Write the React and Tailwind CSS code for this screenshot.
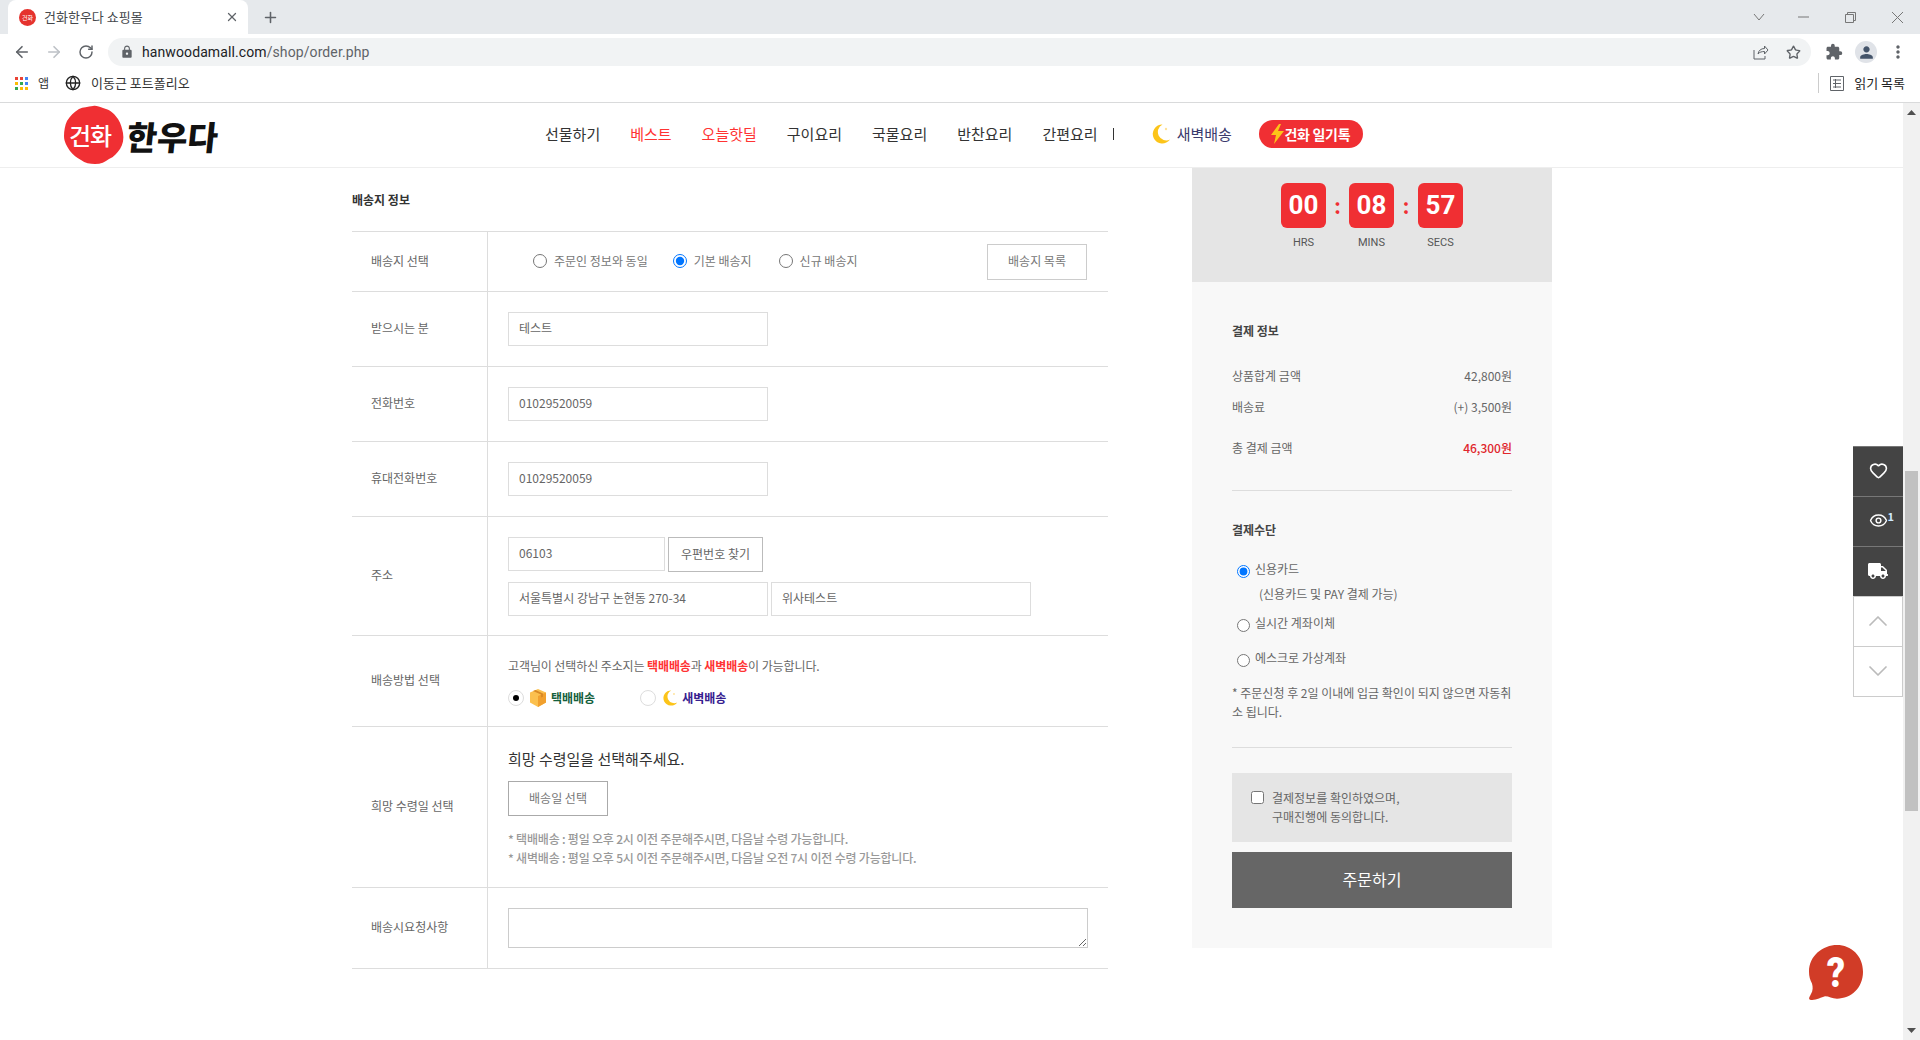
import React from 'react';
import { ArrowLeft, ArrowRight, RotateCw, Star, Globe, Heart, Eye, ChevronUp, ChevronDown, X, Plus } from 'lucide-react';
import { FaTruck } from 'react-icons/fa';
import { MdExtension, MdPerson, MdLock, MdMoreVert } from 'react-icons/md';

const KR = 'font-["Noto_Sans_CJK_KR","Noto_Sans",sans-serif]';

function Moon({ size = 20 }) {
  return (
    <svg width={size} height={size} viewBox="0 0 20 20">
      <path d="M11.500 .5A9.500 9.500 0 1 0 19 15.500 8 8 0 0 1 11.500 .5z" fill="#fcc419" />
      <circle cx="15" cy="5" r="1.200" fill="#ffe39a" />
    </svg>
  );
}

function Box() {
  return (
    <svg width="16" height="18" viewBox="0 0 16 18">
      <path d="M8 0l8 3.500v10L8 18l-8-4.500v-10z" fill="#fbc04e" />
      <path d="M8 7l8-3.500v10L8 18z" fill="#f1a02e" />
      <path d="M3 2l8 3.500v3l2-.8V4.500L5.500 1z" fill="#d98a26" />
    </svg>
  );
}

function Logo() {
  return (
    <div className="relative w-[170px] h-[60px] ml-[63px] shrink-0">
      <svg width="62" height="60" viewBox="0 0 62 60" className="absolute left-0 top-0">
        <path d="M30 1c5-1 8 2 13 3 6 2 9 6 12 10 3 5 4 9 5 14 1 6 0 11-3 16-3 4-6 8-11 10-4 3-8 5-14 5-5 0-10-1-14-4-4-2-8-5-11-9-3-5-6-9-6-15 0-5 1-11 3-15C7 11 11 7 16 4c4-2 9-2 14-3z" fill="#f02f33" />
      </svg>
      <span className={`absolute left-[6px] top-[12px] text-[24px] leading-[36px] font-medium tracking-[-1px] text-white ${KR}`}>건화</span>
      <span className={`absolute left-[64px] top-[9px] text-[33px] leading-[44px] font-black tracking-[0px] text-[#111] -skew-x-6 ${KR}`}>한우다</span>
    </div>
  );
}

function ChromeBar() {
  return (
    <div className="shrink-0 text-[#5f6368]">
      <div className="h-[34px] bg-[#e6e9ec] flex items-end pl-2">
        <div className="w-[240px] h-[34px] bg-white rounded-t-lg flex items-center pl-[11px] pr-[9px]">
          <span className={`size-[17px] rounded-full bg-[#e5332e] text-white text-[6px] flex items-center justify-center ${KR}`}>건화</span>
          <span className={`ml-2 flex-1 text-[13px] text-[#45494d] ${KR}`}>건화한우다 쇼핑몰</span>
          <X size={14} strokeWidth={2.200} />
        </div>
        <div className="ml-[14px] h-[34px] flex items-center"><Plus size={17} strokeWidth={2.200} /></div>
        <div className="flex-1" />
        <div className="h-[34px] flex items-center text-[#777]">
          <svg width="12" height="8" viewBox="0 0 12 8" className="mr-[33px]"><path d="M1 1l5 6 5-6" fill="none" stroke="currentColor" /></svg>
          <svg width="11" height="2" viewBox="0 0 11 2" className="mr-[36px]"><path d="M0 1h11" stroke="currentColor" /></svg>
          <svg width="11" height="11" viewBox="0 0 11 11" className="mr-[36px]"><path d="M.5 2.500h8v8h-8zM2.500 2.500v-2h8v8h-2" fill="none" stroke="currentColor" /></svg>
          <svg width="11" height="11" viewBox="0 0 11 11" className="mr-[17px]"><path d="M0 0l11 11M11 0L0 11" stroke="currentColor" /></svg>
        </div>
      </div>
      <div className="h-[36px] bg-white flex items-center pl-[13px]">
        <ArrowLeft size={18} strokeWidth={2.200} />
        <ArrowRight size={18} strokeWidth={2.200} className="ml-[14px] text-[#bdc1c6]" />
        <RotateCw size={16} strokeWidth={2.200} className="ml-[15px]" />
        <div className="ml-[14px] w-[1703px] h-[28px] bg-[#f1f3f4] rounded-full flex items-center pl-[12px] pr-[10px]">
          <MdLock size={14} />
          <span className="ml-[8px] flex-1 text-[14px] tracking-[.1px] font-['Roboto',sans-serif] text-[#202124]">
            hanwoodamall.com<span className="text-[#5f6368]">/shop/order.php</span>
          </span>
          <svg width="16" height="16" viewBox="0 0 16 16" className="mr-[17px]">
            <path d="M1 6v9h11v-3M5 10c.5-3.500 3-5.500 6.500-5.500V2L15 6l-3.500 4V7.500C9 7.500 6.500 8 5 10z" fill="none" stroke="currentColor" />
          </svg>
          <Star size={15} strokeWidth={2.200} />
        </div>
        <MdExtension size={18} className="ml-[14px]" />
        <span className="ml-[12px] size-[22px] rounded-full bg-[#e0e3e8] flex items-center justify-center text-[#44546a]"><MdPerson size={19} /></span>
        <MdMoreVert size={20} className="ml-[11px]" />
      </div>
      <div className="h-[33px] bg-white border-b border-[#d9dadb] flex items-center pl-[15px] pr-[15px] pb-[6px]">
        <div className="grid grid-cols-3 gap-[2px]">
          <i className="size-[3px] bg-[#ea4335]" /><i className="size-[3px] bg-[#ea4335]" /><i className="size-[3px] bg-[#4285f4]" />
          <i className="size-[3px] bg-[#fbbc04]" /><i className="size-[3px] bg-[#34a853]" /><i className="size-[3px] bg-[#4285f4]" />
          <i className="size-[3px] bg-[#34a853]" /><i className="size-[3px] bg-[#fbbc04]" /><i className="size-[3px] bg-[#fbbc04]" />
        </div>
        <span className={`ml-[10px] text-[12px] text-[#333] ${KR}`}>앱</span>
        <Globe size={16} className="ml-[16px] text-[#222]" />
        <span className={`ml-[10px] text-[13px] text-[#333] ${KR}`}>이동근 포트폴리오</span>
        <div className="flex-1" />
        <i className="w-px h-[20px] bg-[#ccc] mr-[11px]" />
        <svg width="14" height="15" viewBox="0 0 14 15" className="mr-[10px]">
          <path d="M.5.500h13v14H.500zM3 4h8M3 7.500h8M3 11h8M5.500 3v9" fill="none" stroke="#5f6368" />
        </svg>
        <span className={`text-[13px] text-[#222] ${KR}`}>읽기 목록</span>
      </div>
    </div>
  );
}

function Header() {
  const items = [
    ['선물하기', 'text-[#333]'], ['베스트', 'text-[#f33]'], ['오늘핫딜', 'text-[#f33]'], ['구이요리', 'text-[#333]'],
    ['국물요리', 'text-[#333]'], ['반찬요리', 'text-[#333]'], ['간편요리', 'text-[#333]'],
  ];
  return (
    <div className="h-[65px] border-b border-[#eee] flex items-center shrink-0">
      <Logo />
      <nav className={`ml-[312px] pb-[2px] flex items-center text-[15px] ${KR}`}>
        <div className="flex items-center gap-[30px]">
          {items.map(([t, c]) => <a key={t} className={c}>{t}</a>)}
        </div>
        <i className="ml-[15px] w-px h-[12px] bg-[#333]" />
        <span className="ml-[37px] flex items-center"><Moon /></span>
        <a className="ml-[6px] text-[#3b3b6d]">새벽배송</a>
        <a className="ml-[27px] w-[104px] h-[28px] rounded-full bg-[#f02f33] text-white font-bold text-[14px] flex items-center justify-center tracking-[-.3px]">
          <svg width="13" height="20" viewBox="0 0 13 20" className="shrink-0"><path d="M8 0 0 11h5l-2 9 10-13H7l3-7z" fill="#fcc419" /></svg>
          건화 일기톡
        </a>
      </nav>
    </div>
  );
}

function Row({ label, className = '', children }) {
  return (
    <div className="grid grid-cols-[136px_1fr] border-b border-[#ddd]">
      <div className="border-r border-[#ddd] pl-[19px] pb-[2px] flex items-center text-[12px] text-[#666]">{label}</div>
      <div className={`pl-5 ${className}`}>{children}</div>
    </div>
  );
}

function Field({ value, className = 'w-[260px]' }) {
  return (
    <input
      readOnly
      value={value}
      className={`${className} h-[34px] border border-[#ddd] px-[10px] pb-[3px] text-[12px] text-[#666] outline-none ${KR}`}
    />
  );
}

function Radio({ label, checked }) {
  return (
    <label className="flex items-center gap-[7px] text-[12px] text-[#777]">
      <input type="radio" name="addr" defaultChecked={checked} className="size-[14px]" />
      <span className="pb-px">{label}</span>
    </label>
  );
}

function ShippingForm() {
  return (
    <div className="w-[756px] shrink-0">
      <h3 className="pt-6 pb-[23px] text-[12px] leading-4 font-bold text-[#333]">배송지 정보</h3>
      <div className="border-t border-[#ddd]">
        <Row label="배송지 선택" className="h-[59px] flex items-center">
          <div className="ml-[25px] pb-px flex items-center">
            <Radio label="주문인 정보와 동일" />
            <div className="ml-[25px]"><Radio label="기본 배송지" checked /></div>
            <div className="ml-[27px]"><Radio label="신규 배송지" /></div>
          </div>
          <button className="ml-auto mr-[21px] w-[100px] h-[36px] border border-[#ccc] pb-[2px] text-[12px] text-[#777]">배송지 목록</button>
        </Row>
        <Row label="받으시는 분" className="py-5"><Field value="테스트" /></Row>
        <Row label="전화번호" className="py-5"><Field value="01029520059" /></Row>
        <Row label="휴대전화번호" className="py-5"><Field value="01029520059" /></Row>
        <Row label="주소" className="pt-5 pb-[19px]">
          <div className="flex gap-[3px]">
            <Field value="06103" className="w-[157px]" />
            <button className="w-[95px] h-[35px] border border-[#bbb] pb-[2px] text-[12px] text-[#666]">우편번호 찾기</button>
          </div>
          <div className="flex gap-[3px] mt-[10px]">
            <Field value="서울특별시 강남구 논현동 270-34" />
            <Field value="위사테스트" className="w-[260px]" />
          </div>
        </Row>
        <Row label="배송방법 선택" className="h-[90px] pt-[22px]">
          <p className="text-[12px] leading-4 tracking-[-.1px] text-[#666]">
            고객님이 선택하신 주소지는 <b className="text-[#f33]">택배배송</b>과 <b className="text-[#f33]">새벽배송</b>이 가능합니다.
          </p>
          <div className="mt-4 flex items-center h-4 text-[12px] font-bold">
            <span className="size-4 rounded-full border border-[#ddd] flex items-center justify-center"><i className="size-[6px] rounded-full bg-black" /></span>
            <span className="ml-[6px]"><Box /></span>
            <span className="ml-[5px] text-[#14603c]">택배배송</span>
            <span className="ml-[45px] size-4 rounded-full border border-[#ddd]" />
            <span className="ml-[6px] flex"><Moon size={16} /></span>
            <span className="ml-[4px] text-[#37208f]">새벽배송</span>
          </div>
        </Row>
        <Row label="희망 수령일 선택" className="h-[160px] pt-[20px]">
          <p className="text-[15px] leading-6 text-[#333]">희망 수령일을 선택해주세요.</p>
          <button className="mt-[10px] block w-[100px] h-[35px] border border-[#aaa] pb-[2px] text-[12px] text-[#777]">배송일 선택</button>
          <p className="mt-[13px] text-[12px] leading-[19px] tracking-[-.2px] font-medium text-[#999]">* 택배배송 : 평일 오후 2시 이전 주문해주시면, 다음날 수령 가능합니다.</p>
          <p className="text-[12px] leading-[19px] tracking-[-.2px] font-medium text-[#999]">* 새벽배송 : 평일 오후 5시 이전 주문해주시면, 다음날 오전 7시 이전 수령 가능합니다.</p>
        </Row>
        <Row label="배송시요청사항" className="py-5">
          <textarea readOnly className="block w-[580px] h-10 border border-[#ccc] outline-none" />
        </Row>
      </div>
    </div>
  );
}

function TimeBox({ value, label }) {
  return (
    <div className="w-[45px] flex flex-col items-center">
      <div className="size-[45px] rounded-[6px] bg-[#f02f33] text-white text-[26px] font-bold flex items-center justify-center font-['Roboto',sans-serif]">{value}</div>
      <span className="mt-[7px] text-[11px] leading-4 text-[#555] font-['Roboto',sans-serif]">{label}</span>
    </div>
  );
}

function PayRadio({ label, checked, className = '' }) {
  return (
    <label className={`flex items-start h-[18px] pl-[5px] text-[12px] leading-[18px] text-[#666] ${className}`}>
      <input type="radio" name="pay" defaultChecked={checked} className="mt-[5px] size-[13px]" />
      <span className="ml-[5px]">{label}</span>
    </label>
  );
}

function Sidebar() {
  return (
    <div className="w-[360px] ml-[84px] shrink-0 self-start">
      <div className="h-[114px] bg-[#e5e5e5] pt-[15px] flex justify-center">
        <TimeBox value="00" label="HRS" />
        <span className="w-[23px] h-[45px] flex items-center justify-center text-[#f02f33] text-[20px] font-bold">:</span>
        <TimeBox value="08" label="MINS" />
        <span className="w-[24px] h-[45px] flex items-center justify-center text-[#f02f33] text-[20px] font-bold">:</span>
        <TimeBox value="57" label="SECS" />
      </div>
      <div className="bg-[#f8f8f8] px-10 pt-10 pb-10 text-[12px] leading-[18px] text-[#666]">
        <h4 className="font-bold text-[#444]">결제 정보</h4>
        <div className="mt-[27px] flex justify-between"><span>상품합계 금액</span><span>42,800원</span></div>
        <div className="mt-[13px] flex justify-between"><span>배송료</span><span>(+) 3,500원</span></div>
        <div className="mt-[23px] flex justify-between"><span>총 결제 금액</span><span className="text-[#e0262c] font-medium">46,300원</span></div>
        <hr className="mt-[33px] border-[#ddd]" />
        <h4 className="mt-[30px] font-bold text-[#444]">결제수단</h4>
        <PayRadio label="신용카드" checked className="mt-[21px]" />
        <p className="mt-[7px] ml-[27px]">(신용카드 및 PAY 결제 가능)</p>
        <PayRadio label="실시간 계좌이체" className="mt-[11px]" />
        <PayRadio label="에스크로 가상계좌" className="mt-[17px]" />
        <p className="mt-[16px] leading-[19px] break-all">* 주문신청 후 2일 이내에 입금 확인이 되지 않으면 자동취소 됩니다.</p>
        <hr className="mt-[26px] border-[#ddd]" />
        <div className="mt-[25px] h-[69px] bg-[#e5e5e5] pt-[15px] pl-[19px] flex items-start">
          <input type="checkbox" className="mt-[3px] size-[13px]" />
          <p className="ml-2 leading-[19px]">결제정보를 확인하였으며,<br />구매진행에 동의합니다.</p>
        </div>
        <button className="mt-[10px] block w-full h-[56px] bg-[#666] pb-[2px] text-white text-[16px]">주문하기</button>
      </div>
    </div>
  );
}

function Floating() {
  return (
    <>
      <div className="absolute right-0 top-[343px] w-[50px] text-white">
        <div className="h-[50px] bg-[#444] border-t border-[#777] pb-[2px] flex items-center justify-center"><Heart size={19} strokeWidth={2} /></div>
        <div className="relative h-[50px] bg-[#444] border-t border-[#777] pb-[2px] flex items-center justify-center">
          <Eye size={19} strokeWidth={1.800} />
          <span className="absolute right-[9px] top-[13px] text-[11px] leading-3 font-bold text-[#cfeaff]">1</span>
        </div>
        <div className="h-[50px] bg-[#444] border-t border-[#777] pb-[2px] flex items-center justify-center"><FaTruck size={20} /></div>
        <div className="h-[50px] bg-white border-x border-t border-[#ccc] pb-[2px] flex items-center justify-center text-[#bbb]"><ChevronUp size={32} strokeWidth={1.300} /></div>
        <div className="h-[51px] bg-white border border-[#ccc] pb-[2px] flex items-center justify-center text-[#bbb]"><ChevronDown size={32} strokeWidth={1.300} /></div>
      </div>
      <svg width="56" height="56" viewBox="0 0 56 48" preserveAspectRatio="none" className="absolute left-[1808px] top-[842px]">
        <path d="M29 0C43 0 55 9 55 23S43 46 29 46c-5 0-8-2-12-2-4 1-10 4-15 3-2-1 0-3 1-5 2-3 2-6 1-9-2-3-3-6-3-10C1 9 15 0 29 0z" fill="#d13c27" />
        <text x="28" y="36" textAnchor="middle" fontSize="36" fontWeight="900" fill="#fff" fontFamily="Roboto, sans-serif">?</text>
      </svg>
    </>
  );
}

function Scrollbar() {
  return (
    <div className="w-[17px] shrink-0 bg-[#f1f1f1] flex flex-col items-center">
      <svg width="9" height="5" viewBox="0 0 9 5" className="mt-[7px]"><path d="M4.500 0 9 5H0z" fill="#505050" /></svg>
      <div className="mt-[356px] w-[13px] h-[340px] bg-[#c1c1c1]" />
      <div className="flex-1" />
      <svg width="9" height="5" viewBox="0 0 9 5" className="mb-[7px]"><path d="M0 0h9L4.500 5z" fill="#505050" /></svg>
    </div>
  );
}

export default function App() {
  return (
    <div className={`w-[1920px] h-[1040px] overflow-hidden flex flex-col bg-white ${KR}`}>
      <ChromeBar />
      <div className="flex-1 min-h-0 flex">
        <div className="relative w-[1903px] shrink-0 flex flex-col">
          <Header />
          <div className="flex pl-[352px]">
            <ShippingForm />
            <Sidebar />
          </div>
          <Floating />
        </div>
        <Scrollbar />
      </div>
    </div>
  );
}
